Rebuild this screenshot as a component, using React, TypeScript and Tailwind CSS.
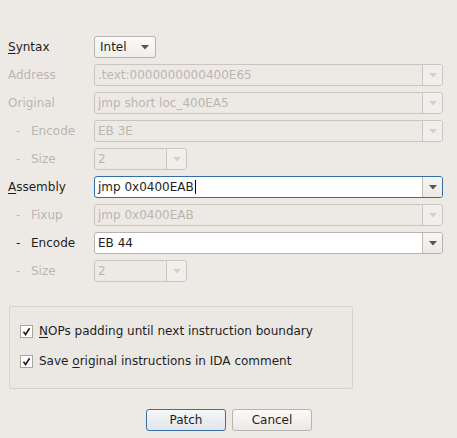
import React from "react";

const font = { fontFamily: '"DejaVu Sans", sans-serif' };

function Arrow({ disabled }: { disabled?: boolean }) {
  return (
    <svg width="8" height="5" viewBox="0 0 8 5">
      <path d="M0 0 H8 L4 4.5 Z" fill={disabled ? "#d3d0cc" : "#555555"} />
    </svg>
  );
}

function Combo({
  text,
  disabled,
  focused,
  width,
  cursor,
}: {
  text: string;
  disabled?: boolean;
  focused?: boolean;
  width?: string;
  cursor?: boolean;
}) {
  const border = focused
    ? "border-[#2f6ea6]"
    : disabled
    ? "border-[#c9c5c0]"
    : "border-[#b7b3ae]";
  return (
    <div
      className={`flex h-[22px] ${width ?? "flex-1"} rounded-[3px] border ${border} ${
        disabled ? "bg-[#edeae6]" : "bg-white"
      } overflow-hidden`}
    >
      <div
        className={`flex flex-1 items-center pl-[3px] text-[12px] ${
          disabled ? "text-[#b9b5b0]" : "text-[#1e1e1e]"
        } whitespace-nowrap overflow-hidden`}
      >
        {text}
        {cursor && <span className="ml-[1px] inline-block h-[14px] w-[1px] bg-black" />}
      </div>
      <div
        className={`flex w-[20px] items-center justify-center border-l ${
          disabled ? "border-[#c9c5c0] bg-[#f1efec]" : "border-[#c2beb9] bg-gradient-to-b from-[#f8f7f6] to-[#ebe8e5]"
        }`}
      >
        <Arrow disabled={disabled} />
      </div>
    </div>
  );
}

function Label({
  text,
  disabled,
  sub,
  underline,
}: {
  text: string;
  disabled?: boolean;
  sub?: boolean;
  underline?: number;
}) {
  const color = disabled ? "text-[#bab6b1]" : "text-[#1e1e1e]";
  return (
    <div className={`flex w-[86px] items-center text-[12px] ${color}`}>
      {sub ? (
        <>
          <span className="ml-[8px] w-[15px]">-</span>
          <span>{text}</span>
        </>
      ) : underline !== undefined ? (
        <span>
          <span className="underline underline-offset-[2px]">{text.slice(0, 1)}</span>
          {text.slice(1)}
        </span>
      ) : (
        <span>{text}</span>
      )}
    </div>
  );
}

function Check({ children }: { children: React.ReactNode }) {
  return (
    <div className="flex h-[14px] items-center">
      <div className="flex h-[13px] w-[13px] items-center justify-center border border-[#a9a5a0] bg-white">
        <svg width="9" height="9" viewBox="0 0 9 9">
          <path d="M1.5 4.8 L3.6 7.5 L7.6 1.2" stroke="#1e1e1e" strokeWidth="1.6" fill="none" />
        </svg>
      </div>
      <span className="ml-[6px] text-[12px] text-[#1e1e1e]">{children}</span>
    </div>
  );
}

export default function App() {
  return (
    <div className="h-[438px] w-[457px] bg-[#edeae6] pl-[8px] pr-[14px] pt-[36px]" style={font}>
      <div className="flex flex-col gap-[6px]">
        <div className="flex h-[22px]">
          <Label text="Syntax" underline={0} />
          <div className="flex h-[22px] w-[62px] items-center justify-between rounded-[3px] border border-[#b7b3ae] bg-gradient-to-b from-[#fbfaf9] to-[#f0eeeb] pl-[5px] pr-[6px] text-[12px] text-[#1e1e1e]">
            <span>Intel</span>
            <Arrow />
          </div>
        </div>
        <div className="flex">
          <Label text="Address" disabled />
          <Combo text=".text:0000000000400E65" disabled />
        </div>
        <div className="flex">
          <Label text="Original" disabled />
          <Combo text="jmp short loc_400EA5" disabled />
        </div>
        <div className="flex">
          <Label text="Encode" disabled sub />
          <Combo text="EB 3E" disabled />
        </div>
        <div className="flex">
          <Label text="Size" disabled sub />
          <Combo text="2" disabled width="w-[93px]" />
        </div>
        <div className="flex">
          <Label text="Assembly" underline={0} />
          <Combo text="jmp 0x0400EAB" focused cursor />
        </div>
        <div className="flex">
          <Label text="Fixup" disabled sub />
          <Combo text="jmp 0x0400EAB" disabled />
        </div>
        <div className="flex">
          <Label text="Encode" sub />
          <Combo text="EB 44" />
        </div>
        <div className="flex">
          <Label text="Size" disabled sub />
          <Combo text="2" disabled width="w-[93px]" />
        </div>
      </div>

      <div className="ml-[1px] mt-[24px] flex h-[83px] w-[344px] flex-col gap-[16px] rounded-[2px] border border-[#d6d2cd] bg-[#ebe8e4] pl-[10px] pt-[17px]">
        <Check>
          <span className="underline underline-offset-[2px]">N</span>OPs padding until next instruction boundary
        </Check>
        <Check>
          Save <span className="underline underline-offset-[2px]">o</span>riginal instructions in IDA comment
        </Check>
      </div>

      <div className="mt-[20px] flex gap-[6px] pl-[138px]">
        <div className="flex h-[22px] w-[80px] items-center justify-center rounded-[3px] border border-[#3672a6] bg-gradient-to-b from-[#f5f7f9] to-[#e1e5e9] text-[12px] text-[#1e1e1e]">
          Patch
        </div>
        <div className="flex h-[22px] w-[80px] items-center justify-center rounded-[3px] border border-[#b7b3ae] bg-gradient-to-b from-[#fbfaf9] to-[#ebe8e5] text-[12px] text-[#1e1e1e]">
          Cancel
        </div>
      </div>
    </div>
  );
}
